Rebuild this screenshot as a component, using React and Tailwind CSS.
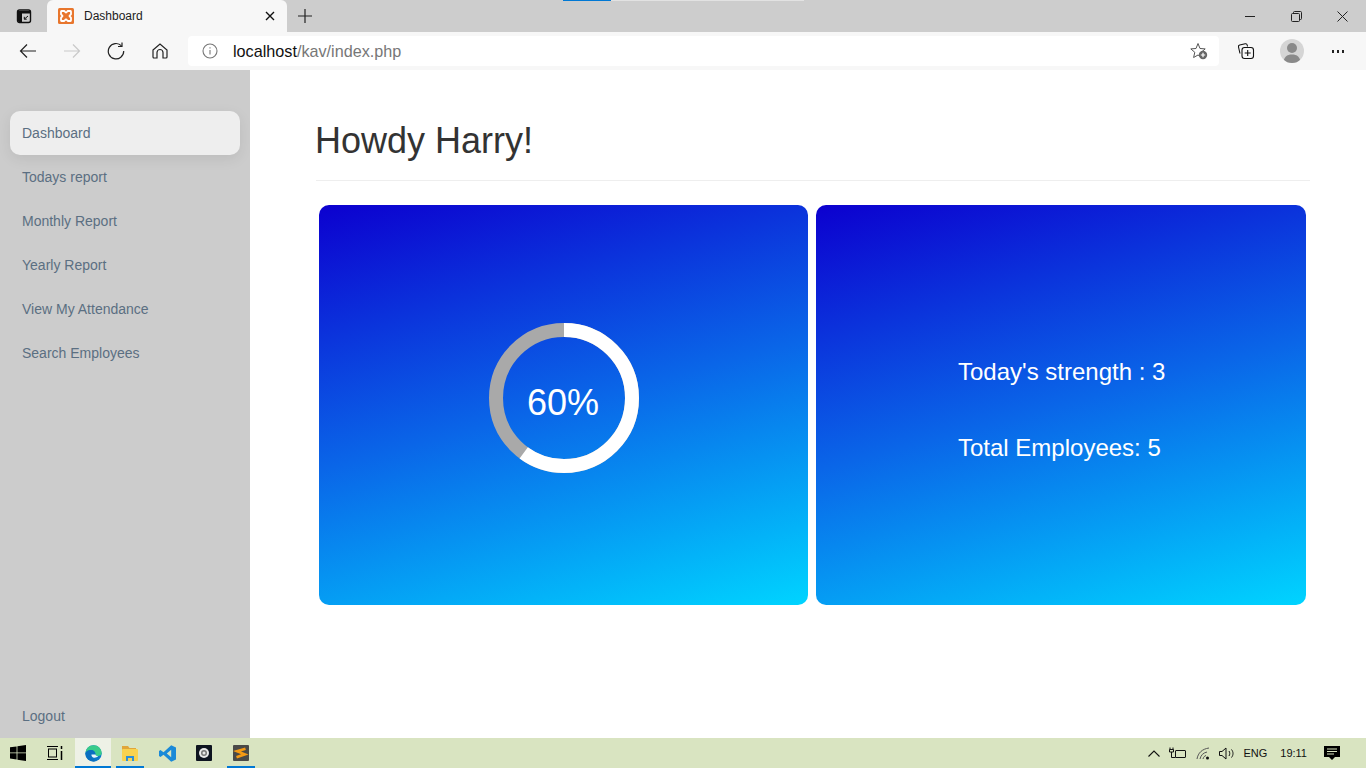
function WorkspaceIcon() {
  return (
    <svg width="16" height="16" viewBox="0 0 16 16" fill="none">
      <rect x="1.500" y="2" width="13" height="12.500" rx="2" stroke="#111" strokeWidth="1.400" />
      <path d="M2 3h12v2.500H6V14H3a1 1 0 0 1-1-1z" fill="#111" />
      <path d="M12 8l-3.500 3M8.300 8.800V11.200h2.400" stroke="#111" strokeWidth="1" />
    </svg>
  );
}

function XamppIcon() {
  return (
    <svg width="16" height="16" viewBox="0 0 16 16">
      <rect width="16" height="16" rx="1.500" fill="#e8762d" />
      <path d="M3.500 3h2.700c.7 0 .7 1.500 1.800 1.500S9.100 3 9.800 3h2.700c.4 0 .5.300.5.700v2.500c0 .7-1.500.8-1.500 1.800s1.500 1.100 1.500 1.800v2.500c0 .4-.1.700-.5.700H9.800c-.7 0-.7-1.500-1.800-1.500S6.900 13 6.200 13H3.500c-.4 0-.5-.3-.5-.7V9.800C3 9.100 4.500 9 4.500 8S3 6.900 3 6.200V3.700c0-.4.100-.7.500-.7z" fill="none" stroke="#fff" strokeWidth="1.800" />
    </svg>
  );
}

function Arrow({ dir, color }) {
  return (
    <svg width="18" height="16" viewBox="0 0 18 16" fill="none" stroke={color} strokeWidth="1.200">
      {dir === "left" ? <path d="M17 8H1.500M8 1.500L1.500 8 8 14.500" /> : <path d="M1 8h15.500M10 1.500L16.500 8 10 14.500" />}
    </svg>
  );
}

function ChromeBar() {
  return (
    <div className="relative shrink-0 bg-[#f7f7f7]">
      <div className="absolute left-[563px] top-0 h-px w-[48px] bg-[#0078d4]" />
      <div className="absolute left-[611px] top-0 h-px w-[193px] bg-[#e2e2e2]" />
      <div className="flex h-8 items-stretch bg-[#cdcdcd]">
        <div className="flex w-[47px] items-center justify-center pl-[1px]">
          <WorkspaceIcon />
        </div>
        <div className="flex w-[240px] items-center rounded-t-[6px] bg-[#f7f7f7] pl-[11px] pr-[12px]">
          <XamppIcon />
          <span className="ml-[10px] flex-1 text-xs text-[#1c1c1c]">Dashboard</span>
          <svg width="10" height="10" viewBox="0 0 10 10" stroke="#111" strokeWidth="1.400">
            <path d="M1 1l8 8M9 1l-8 8" />
          </svg>
        </div>
        <div className="flex w-[36px] items-center justify-center">
          <svg width="14" height="14" viewBox="0 0 14 14" stroke="#222" strokeWidth="1.200">
            <path d="M7 0v14M0 7h14" />
          </svg>
        </div>
        <div className="flex-1" />
        <div className="flex items-center pr-px">
          <div className="flex w-[46px] justify-center">
            <div className="h-px w-[10px] bg-[#222]" />
          </div>
          <div className="flex w-[46px] justify-center">
            <svg width="11" height="11" viewBox="0 0 11 11" fill="none" stroke="#222">
              <rect x="0.500" y="2.500" width="8" height="8" rx="1" />
              <path d="M2.500 2.500V1.500a1 1 0 0 1 1-1h6a1 1 0 0 1 1 1v6a1 1 0 0 1-1 1h-1" />
            </svg>
          </div>
          <div className="flex w-[46px] justify-center">
            <svg width="11" height="11" viewBox="0 0 11 11" stroke="#222">
              <path d="M.500 .500l10 10M10.500 .500l-10 10" />
            </svg>
          </div>
        </div>
      </div>
      <div className="flex h-[38px] items-center">
        <div className="flex w-[56px] justify-center">
          <Arrow dir="left" color="#222" />
        </div>
        <div className="flex w-[32px] justify-center">
          <Arrow dir="right" color="#c9c9c9" />
        </div>
        <div className="flex w-[56px] justify-center">
          <svg width="18" height="18" viewBox="0 0 18 18" fill="none" stroke="#222" strokeWidth="1.200">
            <path d="M14.500 3.800A7.700 7.700 0 1 0 16.700 9" />
            <path d="M15 .500v4h-4" />
          </svg>
        </div>
        <div className="flex w-[32px] justify-center">
          <svg width="16" height="16" viewBox="0 0 16 16" fill="none" stroke="#222" strokeWidth="1.200">
            <path d="M1 7l7-6 7 6v7a1 1 0 0 1-1 1h-3V9.500a3 3 0 0 0-6 0V15H2a1 1 0 0 1-1-1z" />
          </svg>
        </div>
        <div className="ml-[12px] flex h-[30px] w-[1031px] items-center rounded-[4px] bg-white pl-[14px] pr-[11px]">
          <svg width="16" height="16" viewBox="0 0 16 16" fill="none" stroke="#777" strokeWidth="1.100">
            <circle cx="8" cy="8" r="7" />
            <path d="M8 7v4.500M8 4.200v1.300" />
          </svg>
          <span className="ml-[15px] flex-1 text-[16.200px] text-[#777]">
            <span className="text-[#111]">localhost</span>/kav/index.php
          </span>
          <svg width="18" height="18" viewBox="0 0 18 18" fill="none">
            <path d="M8 1.500l2 5 5.200.4-4 3.400 1.200 5.200L8 13l-4.400 2.500 1.200-5.200-4-3.400L6 6.500z" stroke="#555" strokeWidth="1" />
            <circle cx="13" cy="13" r="4.200" fill="#666" />
            <path d="M13 10.800v4.400M10.800 13h4.400" stroke="#fff" strokeWidth="1.200" />
          </svg>
        </div>
        <div className="ml-[17px] flex w-[20px] justify-center">
          <svg width="18" height="18" viewBox="0 0 18 18" fill="none" stroke="#111" strokeWidth="1.100">
            <path d="M3 11.500L1.500 5c-.2-1 .2-1.800 1.200-2l5.500-1.200c1-.2 1.800.3 2 1.200l.3 1.500" />
            <rect x="5" y="5.500" width="11.500" height="11" rx="2.500" />
            <path d="M10.700 8v6M7.700 11h6" />
          </svg>
        </div>
        <div className="ml-[24px] flex h-[24px] w-[24px] items-center justify-center overflow-hidden rounded-full bg-[#d5d5d5]">
          <svg width="24" height="24" viewBox="0 0 24 24" fill="#8a8a8a">
            <circle cx="12" cy="9" r="5" />
            <path d="M3.500 24c0-6 3.500-8.500 8.500-8.500s8.500 2.500 8.500 8.500z" />
          </svg>
        </div>
        <div className="ml-[28px] flex gap-[3px]">
          <div className="h-[3px] w-[2px] bg-[#222]" />
          <div className="h-[3px] w-[2px] bg-[#222]" />
          <div className="h-[3px] w-[2px] bg-[#222]" />
        </div>
      </div>
    </div>
  );
}

function Sidebar() {
  const items = ["Todays report", "Monthly Report", "Yearly Report", "View My Attendance", "Search Employees"];
  return (
    <aside className="flex w-[250px] shrink-0 flex-col bg-[#cccccc] px-[10px] pt-[41px] text-sm text-[#5b6f82]">
      <a className="flex h-[44px] items-center rounded-[10px] bg-[#eeeeee] px-3 shadow-[0_4px_14px_rgba(0,0,0,0.08)]">Dashboard</a>
      {items.map((t) => (
        <a key={t} className="flex h-[44px] items-center px-3">{t}</a>
      ))}
      <a className="mt-auto flex h-[44px] items-center px-3">Logout</a>
    </aside>
  );
}

function Ring() {
  const r = 68;
  const c = 2 * Math.PI * r;
  return (
    <div className="relative flex h-[150px] w-[150px] items-center justify-center">
      <svg className="absolute inset-0" width="150" height="150" viewBox="0 0 150 150" fill="none">
        <circle cx="75" cy="75" r={r} stroke="#a9a9a9" strokeWidth="14" />
        <circle cx="75" cy="75" r={r} stroke="#ffffff" strokeWidth="14" strokeDasharray={`${c * 0.6} ${c}`} transform="rotate(-90 75 75)" />
      </svg>
      <span className="relative -left-px top-[5px] text-[36px] leading-none text-white">60%</span>
    </div>
  );
}

function Main() {
  return (
    <main className="flex-1 bg-white pl-[66px] pr-[56px] pt-[46px]">
      <h1 className="h-[65px] border-b border-[#eeeeee] text-[36px] leading-[50px] text-[#333333]">
        <span className="-ml-px">Howdy Harry!</span>
      </h1>
      <div className="mt-[24px] grid grid-cols-[489px_490px] gap-[8px] pl-[3px]">
        <div className="flex h-[400px] items-center justify-center rounded-[10px] bg-[linear-gradient(165deg,#0c00cf_0%,#0a66e8_50%,#00d4ff_100%)] pb-[14px] pl-px">
          <Ring />
        </div>
        <div className="flex h-[400px] flex-col items-start justify-center gap-[38px] rounded-[10px] bg-[linear-gradient(165deg,#0c00cf_0%,#0a66e8_50%,#00d4ff_100%)] pl-[142px] pt-[10px] text-[24px] leading-[38px] text-white">
          <div>Today's strength : 3</div>
          <div>Total Employees: 5</div>
        </div>
      </div>
    </main>
  );
}

function TaskItem({ w, active, line, children }) {
  return (
    <div className={`relative flex h-full items-center justify-center ${w} ${active ? "bg-[#eef1e6]" : ""}`}>
      {children}
      {line && <div className="absolute bottom-0 left-0 h-[2px] w-full bg-[#0078d4]" />}
    </div>
  );
}

function Taskbar() {
  return (
    <div className="flex h-[30px] shrink-0 items-center bg-[#d9e4c1]">
      <TaskItem w="w-[36px]">
        <svg width="16" height="16" viewBox="0 0 16 16" fill="#000">
          <path d="M0 2.300L6.600 1.400V7.500H0zM7.400 1.300L16 0V7.500H7.400zM0 8.300H6.600V14.500L0 13.600zM7.400 8.300H16V16L7.400 14.700z" />
        </svg>
      </TaskItem>
      <TaskItem w="w-[37px]">
        <svg width="18" height="16" viewBox="0 0 18 16" fill="none" stroke="#000" strokeWidth="1">
          <path d="M1 1.500h11M1 14.500h11" />
          <rect x="2.500" y="4" width="8" height="8" />
          <path d="M15.500 1v3M15.500 6v9" strokeWidth="1.500" />
        </svg>
      </TaskItem>
      <div className="w-[2px]" />
      <TaskItem w="w-[36px]" active line>
        <svg width="17" height="17" viewBox="0 0 17 17">
          <circle cx="8.500" cy="8.500" r="8.200" fill="#0b78c8" />
          <path d="M.500 8C1 3 4.500.300 8.500.300c4.500 0 8.200 3.500 8.200 7.700 0 2.300-2 3-3.500 3-1.300 0-2.700-.5-2.700-1.500C10.500 7 8.500 5 6 5 3.500 5 1.500 6 .500 8z" fill="#38cb8a" />
          <path d="M.500 8C1 6 3.500 5 6 5c2.500 0 4.500 2 4.500 4.500h-4C6 11 7 14 11 15.800 5 18 .300 13 .500 8z" fill="#0a6fc0" />
          <path d="M6.500 9.500h4c0 1 1.400 1.500 2.700 1.500-1 1.500-3.500 2-5 1.500-1.200-.5-1.900-1.700-1.700-3z" fill="#e8f5fb" />
        </svg>
      </TaskItem>
      <div className="w-[5px]" />
      <TaskItem w="w-[28px]" line>
        <svg width="16" height="15" viewBox="0 0 16 15">
          <path d="M0 0h6l1.500 2H14v2H0z" fill="#e0a63a" />
          <rect y="3" width="16" height="12" rx="1" fill="#f8d24f" />
          <path d="M4 15v-5h8v5H10v-3H6v3z" fill="#2a8fd8" />
        </svg>
      </TaskItem>
      <TaskItem w="w-[46px]">
        <svg width="17" height="17" viewBox="0 0 17 17">
          <path d="M12.200.300L17 2.600v11.800l-4.800 2.300L4.500 9.700l-3 2.300L0 11V6l1.500-1 3 2.300z" fill="#1a8ad8" />
          <path d="M12.200 4.800L7.800 8.500l4.400 3.700z" fill="#d9e4c1" />
        </svg>
      </TaskItem>
      <TaskItem w="w-[28px]">
        <svg width="16" height="16" viewBox="0 0 16 16">
          <rect width="16" height="16" rx="1" fill="#0e1420" />
          <circle cx="8" cy="8" r="5" fill="#e8e8e8" />
          <circle cx="8" cy="8" r="3" fill="#777" />
          <circle cx="8" cy="8" r="1.500" fill="#e8e8e8" />
        </svg>
      </TaskItem>
      <div className="w-[9px]" />
      <TaskItem w="w-[28px]" line>
        <svg width="16" height="16" viewBox="0 0 16 16">
          <rect width="16" height="16" rx="1" fill="#4a4a48" />
          <path d="M12.500 3.800L4 6.200l7.800 3.100L3.500 12.200" fill="none" stroke="#f59a14" strokeWidth="2.600" />
        </svg>
      </TaskItem>
      <div className="flex-1" />
      <div className="flex h-full items-center pr-[26px] text-[11px] text-[#111]">
        <svg width="12" height="7" viewBox="0 0 12 7" fill="none" stroke="#111" strokeWidth="1.100">
          <path d="M.500 6.500L6 1l5.500 5.500" />
        </svg>
        <svg className="ml-[9px]" width="17" height="13" viewBox="0 0 17 13" fill="none" stroke="#111">
          <rect x="6.500" y="3.500" width="10" height="7" rx="0.500" />
          <path d="M1 .500v2M4 .500v2M.500 2.500h4v2.500h-4zM2.500 5v5.500h4" />
        </svg>
        <svg className="ml-[10px]" width="15" height="13" viewBox="0 0 15 13" fill="none" stroke="#555" strokeWidth="1">
          <path d="M1 12C2 6 6 2 13 1M4 12c1-4 3-6 7-7M7 12c.5-2 1.500-3 3-3.500" />
          <circle cx="11.500" cy="11" r="1.500" fill="#111" stroke="none" />
        </svg>
        <svg className="ml-[8px]" width="17" height="13" viewBox="0 0 17 13" fill="none" stroke="#111">
          <path d="M.500 4.500H3L7 1v11L3 8.500H.500z" />
          <path d="M10 4c1 1.500 1 3.500 0 5M12.500 2.500c2 2.500 2 5.500 0 8" />
        </svg>
        <span className="ml-[7px]">ENG</span>
        <span className="ml-[13px]">19:11</span>
        <svg className="ml-[17px]" width="16" height="16" viewBox="0 0 16 16">
          <path d="M0 1h16v11h-5l-3 3-3-3H0z" fill="#000" />
          <path d="M3 4h10M3 6.500h10M3 9h7" stroke="#d9e4c1" />
        </svg>
      </div>
    </div>
  );
}

export default function App() {
  return (
    <div className="flex h-[768px] w-[1366px] flex-col overflow-hidden font-['Liberation_Sans',sans-serif]">
      <ChromeBar />
      <div className="flex min-h-0 flex-1">
        <Sidebar />
        <Main />
      </div>
      <Taskbar />
    </div>
  );
}
